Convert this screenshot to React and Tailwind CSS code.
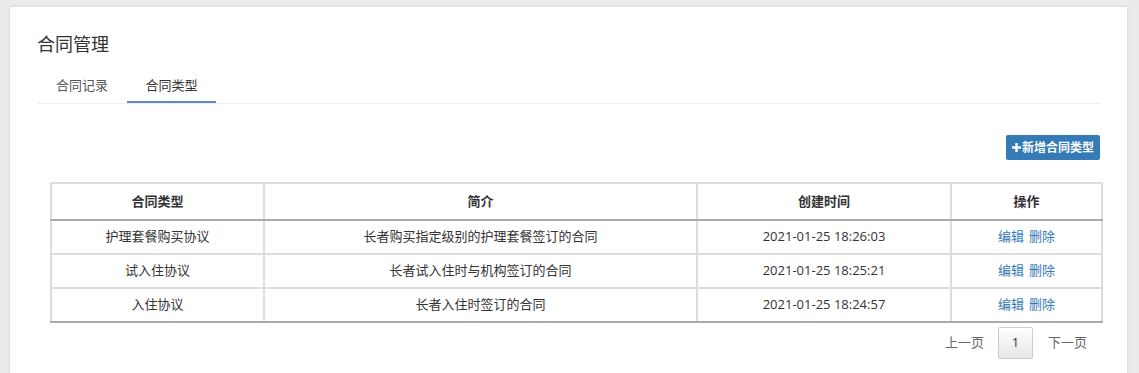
import React from "react";

const rows = [
  ["护理套餐购买协议", "长者购买指定级别的护理套餐签订的合同", "2021-01-25 18:26:03"],
  ["试入住协议", "长者试入住时与机构签订的合同", "2021-01-25 18:25:21"],
  ["入住协议", "长者入住时签订的合同", "2021-01-25 18:24:57"],
];

export default function App() {
  return (
    <div
      className="w-[1139px] h-[373px] bg-[#ebebeb] pt-[7px] pl-[10px] pr-[12px] overflow-hidden"
      style={{ fontFamily: '"Open Sans", "Noto Sans CJK SC", sans-serif' }}
    >
      <div className="bg-white h-[380px] shadow-[0_0_3px_rgba(0,0,0,0.12)] pl-[27px] pr-[27px] pt-[24px] text-[#333]">
        <h1 className="text-[18px] leading-[26px] text-[#333]">合同管理</h1>
        <div className="mt-[17px] flex border-b border-[#eee] text-[13px]">
          <div className="w-[90px] text-center h-[29px] leading-[22px] text-[#555]">合同记录</div>
          <div className="w-[89px] text-center h-[29px] leading-[22px] text-[#333] border-b-2 border-[#5b8cc6] -mb-px">合同类型</div>
        </div>
        <div className="flex justify-end mt-[31px]">
          <button className="w-[94px] h-[25px] bg-[#337ab7] text-white text-[12px] font-bold rounded-[2px] flex items-center justify-center leading-none">
            <svg width="9" height="9" viewBox="0 0 9 9" className="mr-px">
              <rect x="3.3" y="0" width="2.4" height="9" fill="white" />
              <rect x="0" y="3.3" width="9" height="2.4" fill="white" />
            </svg>
            新增合同类型
          </button>
        </div>
        <div className="mx-[13px] mt-[22px]">
          <table className="w-[1051px] border-collapse text-[13px] text-[#333] table-fixed">
            <colgroup>
              <col className="w-[213px]" />
              <col className="w-[433px]" />
              <col className="w-[254px]" />
              <col className="w-[151px]" />
            </colgroup>
            <thead>
              <tr className="h-[37px]">
                {["合同类型", "简介", "创建时间", "操作"].map((h) => (
                  <th key={h} className="border-2 border-[#ddd] border-b-[#aaa] font-bold text-center">
                    {h}
                  </th>
                ))}
              </tr>
            </thead>
            <tbody>
              {rows.map((r, i) => (
                <tr key={i} className="h-[34px]">
                  <td className={`border-2 border-[#ddd] text-center ${i === rows.length - 1 ? "border-b-[#aaa]" : ""}`}>{r[0]}</td>
                  <td className={`border-2 border-[#ddd] text-center ${i === rows.length - 1 ? "border-b-[#aaa]" : ""}`}>{r[1]}</td>
                  <td className={`border-2 border-[#ddd] text-center ${i === rows.length - 1 ? "border-b-[#aaa]" : ""}`}>{r[2]}</td>
                  <td className={`border-2 border-[#ddd] text-center text-[#337ab7] ${i === rows.length - 1 ? "border-b-[#aaa]" : ""}`}>
                    <span className="mr-[5px]">编辑</span>
                    <span>删除</span>
                  </td>
                </tr>
              ))}
            </tbody>
          </table>
          <div className="flex justify-end items-center mt-[4px] text-[13px] text-[#666]">
            <span className="mr-[14px]">上一页</span>
            <span className="w-[35px] h-[32px] border border-[#ccc] rounded-[2px] flex items-center justify-center text-[#333] bg-gradient-to-b from-white to-[#e6e6e6]">1</span>
            <span className="ml-[15px]">下一页</span>
          </div>
        </div>
      </div>
    </div>
  );
}
